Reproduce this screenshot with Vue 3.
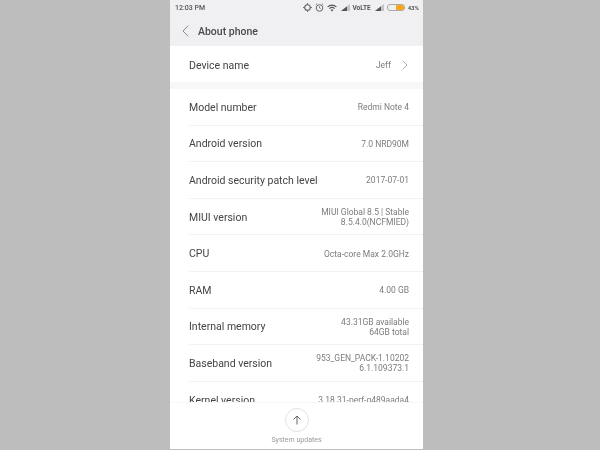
<script setup>
const rows = [
  { label: 'Model number', value: ['Redmi Note 4'] },
  { label: 'Android version', value: ['7.0 NRD90M'] },
  { label: 'Android security patch level', value: ['2017-07-01'] },
  { label: 'MIUI version', value: ['MIUI Global 8.5 | Stable', '8.5.4.0(NCFMIED)'] },
  { label: 'CPU', value: ['Octa-core Max 2.0GHz'] },
  { label: 'RAM', value: ['4.00 GB'] },
  { label: 'Internal memory', value: ['43.31GB available', '64GB total'] },
  { label: 'Baseband version', value: ['953_GEN_PACK-1.10202', '6.1.109373.1'] },
  { label: 'Kernel version', value: ['3.18.31-perf-g489aada4'] },
]
</script>

<template>
  <div class="page">
    <div class="phone">
      <header class="head">
        <div class="status">
          <span class="time">12:03 PM</span>
          <div class="icons">
            <svg width="9" height="9" viewBox="0 0 9 9" class="ic"><circle cx="4.5" cy="4.5" r="2.8" fill="none" stroke="#666" stroke-width="1.1"/><path d="M4.5 0v2M4.5 7v2M0 4.5h2M7 4.5h2" stroke="#666" stroke-width=".9"/></svg>
            <svg width="9" height="9" viewBox="0 0 9 9" class="ic"><circle cx="4.5" cy="5" r="3.3" fill="none" stroke="#666" stroke-width="1"/><path d="M4.5 3.2V5l1.2.7M.8 1.8 2.2.6M8.2 1.8 6.8.6" fill="none" stroke="#666" stroke-width=".8"/></svg>
            <svg width="10" height="8" viewBox="0 0 10 8" class="ic wifi"><path d="M5 7.6 3.6 6a2 2 0 0 1 2.8 0zM2.7 5a3.4 3.4 0 0 1 4.6 0l.7-.8a4.500 4.500 0 0 0-6 0zM1 3.3a5.9 5.9 0 0 1 8 0l.8-.9a7 7 0 0 0-9.600 0z" fill="#555"/></svg>
            <svg width="9" height="7" viewBox="0 0 9 7" class="ic sig"><path d="M0 7 9 0v7z" fill="#c4c4c4"/><path d="M0 7 6 2.300V7z" fill="#555"/></svg>
            <span class="volte">VoLTE</span>
            <svg width="9" height="7" viewBox="0 0 9 7" class="ic sig2"><path d="M0 7 9 0v7z" fill="#c4c4c4"/><path d="M0 7 6 2.300V7z" fill="#555"/></svg>
            <div class="battery"><div class="charge"></div></div>
            <span class="pct">43%</span>
          </div>
        </div>
        <div class="title">
          <svg width="7" height="12" viewBox="0 0 7 12" class="back"><path d="M6.200.6 1 6l5.200 5.400" fill="none" stroke="#8a8a8a" stroke-width="1"/></svg>
          <span>About phone</span>
        </div>
      </header>

      <div class="device">
        <span class="label">Device name</span>
        <span class="device-val">
          <span class="value">Jeff</span>
          <svg width="6" height="10" viewBox="0 0 6 10"><path d="M.7.7 5 5 .7 9.300" fill="none" stroke="#b0b0b0" stroke-width="1"/></svg>
        </span>
      </div>
      <div class="gap"></div>

      <div class="list">
        <div v-for="r in rows" :key="r.label" class="row">
          <span class="label">{{ r.label }}</span>
          <div class="value">
            <div v-for="line in r.value" :key="line">{{ line }}</div>
          </div>
        </div>
      </div>

      <footer class="foot">
        <div class="circle">
          <svg width="10" height="10" viewBox="0 0 10 10"><path d="M5 9.500V1M1.500 4.500 5 1l3.500 3.500" fill="none" stroke="#666" stroke-width="1"/></svg>
        </div>
        <span class="foot-text">System updates</span>
      </footer>
    </div>
  </div>
</template>

<style>
html, body { margin: 0; background: #bdbdbd; }
</style>

<style scoped>
.page {
  width: 600px;
  height: 450px;
  background: #bdbdbd;
  display: flex;
  justify-content: center;
  overflow: hidden;
  font-family: Roboto, "Liberation Sans", sans-serif;
}
.phone {
  width: 253px;
  height: 449px;
  margin-left: -7px;
  background: #fff;
  position: relative;
  overflow: hidden;
  filter: blur(0.7px);
}
.head {
  height: 46px;
  background: #f0f0f2;
}
.status {
  height: 15px;
  padding: 0 4px 0 5px;
  display: flex;
  align-items: center;
  justify-content: space-between;
}
.time { font-size: 7px; color: #555; font-weight: 500; }
.icons { display: flex; align-items: center; }
.ic { margin-right: 3px; }
.wifi { margin-right: 4px; }
.sig { margin-right: 2px; }
.sig2 { margin-right: 3px; }
.volte { font-size: 6.500px; font-weight: 700; color: #555; margin-right: 4px; }
.battery {
  width: 16px;
  height: 5px;
  border: 1px solid #aaa;
  border-radius: 3px;
  margin-right: 3px;
  overflow: hidden;
  display: flex;
  justify-content: flex-end;
}
.charge { width: 8px; background: #f5a623; }
.pct { font-size: 6px; font-weight: 700; color: #555; }
.title {
  height: 32px;
  display: flex;
  align-items: center;
  padding: 0 0 0 12px;
  font-size: 10.500px;
  font-weight: 500;
  color: #4a4a4a;
}
.back { margin-right: 9px; }
.device {
  height: 36px;
  padding: 2px 15px 0 19px;
  box-sizing: border-box;
  display: flex;
  align-items: center;
  justify-content: space-between;
  background: #fff;
}
.device-val { display: flex; align-items: center; gap: 11px; }
.gap { height: 7px; background: #f7f7f8; }
.list { padding-left: 19px; }
.row {
  height: 36.600px;
  box-sizing: border-box;
  padding: 1px 14px 0 0;
  display: flex;
  align-items: center;
  justify-content: space-between;
  border-bottom: 1px solid #f2f2f2;
}
.label { font-size: 10.500px; color: #444; }
.value {
  font-size: 8.500px;
  line-height: 10px;
  color: #7c7c7c;
  text-align: right;
}
.foot {
  position: absolute;
  left: 0;
  right: 0;
  bottom: 0;
  height: 47px;
  background: #fff;
  border-top: 1px solid #f7f7f7;
  display: flex;
  flex-direction: column;
  align-items: center;
  padding-top: 5px;
  box-sizing: border-box;
}
.circle {
  width: 24px;
  height: 24px;
  border: 1px solid #e2e2e2;
  border-radius: 50%;
  box-sizing: border-box;
  display: flex;
  align-items: center;
  justify-content: center;
}
.foot-text { font-size: 7px; color: #999; margin-top: 4px; }
</style>
